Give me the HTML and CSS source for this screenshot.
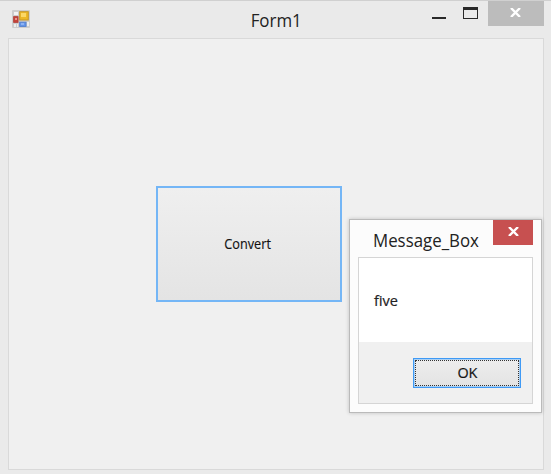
FILE: index.html
```
<!DOCTYPE html>
<html lang="en">
<head>
<meta charset="utf-8">
<title>Form1</title>
<link rel="stylesheet" href="styles.css">
</head>
<body>
<main class="window">
  <header class="titlebar">
    <svg class="app-icon" width="18" height="18" viewBox="0 0 18 18">
      <rect width="18" height="18" rx="1" fill="#cdcdcd"/>
      <rect x="2" y="2" width="4" height="3" fill="#f3f3f3"/>
      <rect x="7.700" y="1.700" width="8.600" height="8.300" fill="#edb827" stroke="#c59627"/>
      <rect x="9" y="3" width="5" height="4" fill="#fbd766"/>
      <rect x="1.700" y="6.700" width="4.300" height="5.600" fill="#c7453c" stroke="#b33d36"/>
      <rect x="3" y="8" width="2" height="2" fill="#e6978d"/>
      <rect x="7.700" y="12.200" width="6.300" height="4.200" fill="#6496e9" stroke="#5581d0"/>
      <rect x="9" y="13" width="3" height="2" fill="#8db2f3"/>
      <path d="M2 14h2v3H2zM5 14h1v3H5zM15 12h2v4h-2z" fill="#ededed"/>
    </svg>
    <h1 class="title"><span class="fit-title">Form1</span></h1>
    <div class="controls">
      <svg width="56" height="25" viewBox="0 0 56 25" shape-rendering="crispEdges">
        <path d="M0 16h14v2H0z" fill="#292929"/>
        <path d="M31 6h15v12H31zM32 9v8h13V9z" fill="#292929" fill-rule="evenodd"/>
      </svg>
      <div class="close"><svg width="11" height="9" viewBox="0 0 11 9"><path d="M1 0l9 9M10 0L1 9" stroke="#fff" stroke-width="2.400"/></svg></div>
    </div>
  </header>
  <section class="client">
    <button class="convert"><span class="fit-convert">Convert</span></button>
  </section>
</main>
<section class="dialog">
  <header class="dialog-bar">
    <h2 class="dialog-title"><span class="fit-dialog">Message_Box</span></h2>
    <div class="close dialog-close"><svg width="11" height="9" viewBox="0 0 11 9"><path d="M1 0l9 9M10 0L1 9" stroke="#fff" stroke-width="2.400"/></svg></div>
  </header>
  <div class="dialog-body">
    <p class="message"><span class="fit-message">five</span></p>
    <footer class="actions">
      <button class="ok"><span class="ok-inner"><span class="fit-ok">OK</span></span></button>
    </footer>
  </div>
</section>
</body>
</html>
```
FILE: styles.css
```
* { box-sizing: border-box; }
body {
  margin: 0;
  width: 551px;
  height: 474px;
  overflow: hidden;
  background: #eaeaea;
  color: #222;
  font-family: "Open Sans", "Noto Sans", sans-serif;
}
h1, h2, p { margin: 0; font-weight: 400; }
svg { display: block; }
span { display: inline-block; }
button { margin: 0; padding: 0; font: inherit; color: #111; }
.window {
  height: 474px;
  padding: 0 7px 4px 8px;
  border-top: 1px solid #d0d0d0;
}
.titlebar {
  height: 37px;
  display: grid;
  grid-template-columns: 112px 1fr 112px;
  padding-left: 4px;
}
.app-icon { margin-top: 9px; }
.title {
  text-align: center;
  font-size: 18px;
  line-height: 38px;
  padding-right: 4px;
}
.controls { display: flex; }
.close {
  width: 56px;
  height: 25px;
  display: flex;
  justify-content: center;
  padding: 7px 1px 0 0;
  background: #bcbcbc;
}
.client {
  height: 432px;
  border: 1px solid #d9d9d9;
  background: #f0f0f0;
  padding: 147px 0 0 147px;
}
.convert {
  display: block;
  width: 186px;
  height: 116px;
  padding: 0 2px 2px 0;
  border: 2px solid #74b6f6;
  background: linear-gradient(#efefef, #e4e4e4);
  font-size: 14.5px;
}
.dialog {
  position: absolute;
  left: 349px;
  top: 219px;
  width: 193px;
  height: 194px;
  padding: 0 8px;
  border: 1px solid #bababa;
  background: #fcfcfc;
  box-shadow: 0 0 4px rgba(0, 0, 0, .2);
}
.dialog-bar {
  height: 37px;
  display: flex;
  justify-content: space-between;
}
.dialog-title {
  padding-left: 15px;
  font-size: 18px;
  line-height: 40px;
  white-space: nowrap;
  width: 135px;
}
.dialog-close { width: 40px; padding-right: 0; background: #c75050; }
.dialog-body {
  height: 147px;
  border: 1px solid #d5d5d5;
  background: #fff;
}
.message {
  height: 84px;
  padding: 32px 0 0 15px;
  font-size: 14.5px;
  line-height: 21px;
  color: #222;
}
.actions {
  height: 61px;
  padding: 16px 11px 0 0;
  display: flex;
  justify-content: flex-end;
  background: #f0f0f0;
}
.ok {
  width: 108px;
  height: 30px;
  padding: 1px;
  border: 1px solid #3f9af5;
  outline: 1px solid #a9d0f5;
  outline-offset: -2px;
  background: linear-gradient(#eee, #e3e3e3);
}
.ok-inner {
  display: block;
  height: 26px;
  border: 1px dotted #333;
  font-size: 15px;
  line-height: 22px;
}
.fit-title { transform: scaleX(.94); }
.fit-dialog { transform: scaleX(.936); transform-origin: left; }
.fit-convert { transform: scaleX(.875); -webkit-text-stroke: .15px #111; }
.fit-message { transform: scaleX(1); transform-origin: left; -webkit-text-stroke: .2px #222; }
.fit-ok { transform: scaleX(.96); -webkit-text-stroke: .2px #222; }
```
